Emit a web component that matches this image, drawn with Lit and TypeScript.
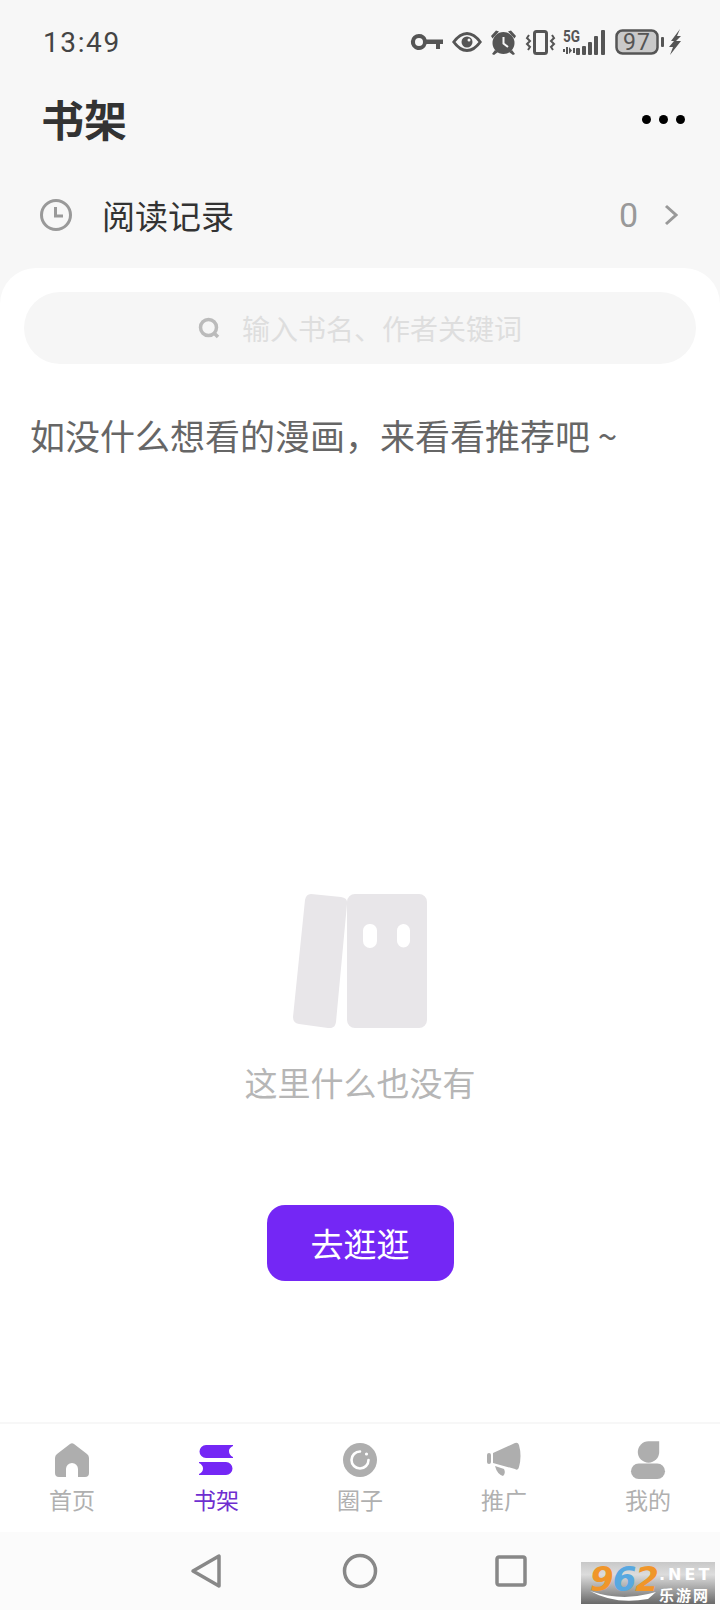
import { LitElement, css, html, svg } from "lit";
import { customElement } from "lit/decorators.js";

const tabs = [
  {
    label: "首页",
    icon: svg`<path d="M15 1 Q17 -0.500 19 1 L32 11 Q34 12.500 34 15 V30 Q34 34 30 34 H23 V26 A6 6 0 0 0 11 26 V34 H4 Q0 34 0 30 V15 Q0 12.500 2 11 Z"/>`,
  },
  {
    label: "书架",
    active: true,
    icon: svg`<path d="M7 2 H34 V3 Q30 5 30 8 Q30 12 34 14 V15 H7 A6.500 6.500 0 0 1 7 2 Z"/><path d="M0 19 H27 A6.500 6.500 0 0 1 27 32 H0 V31 Q4 29 4 25.500 Q4 22 0 20 Z"/>`,
  },
  {
    label: "圈子",
    icon: svg`<circle cx="17" cy="17" r="17"/><path d="M17 8.500 A8.500 8.500 0 1 0 25.500 17" fill="none" stroke="#fff" stroke-width="2.600" stroke-linecap="round"/><circle cx="23.500" cy="11" r="1.600" fill="#fff"/>`,
  },
  {
    label: "推广",
    icon: svg`<rect x="0" y="10" width="4" height="11" rx="2"/><path d="M6 10 L28 0 Q31 -1 32 2 Q35 13 32 24 Q31 28 28 26 L6 20 Z"/><path d="M8 23 L17 26 Q19 30 16 33 Q10 31 8 23 Z"/>`,
  },
  {
    label: "我的",
    icon: svg`<path d="M17.500 -1.700 H28.200 V9 A10.700 10.700 0 1 1 17.500 -1.700 Z"/><rect x="0" y="20.500" width="34" height="15.500" rx="7.750"/>`,
  },
];

@customElement("app-root")
export class AppRoot extends LitElement {
  static styles = css`
    :host {
      display: flex;
      flex-direction: column;
      position: relative;
      width: 720px;
      height: 1610px;
      background: #f7f7f7;
      font-family: "Noto Sans CJK SC", "Noto Sans", sans-serif;
      overflow: hidden;
    }

    .status {
      display: flex;
      align-items: center;
      justify-content: space-between;
      height: 26px;
      padding: 29px 39px 1px 43px;
    }
    .time {
      position: relative;
      top: 1px;
      font: 400 28px/26px Roboto, sans-serif;
      letter-spacing: 1.600px;
      color: #444;
    }
    .status-icons {
      display: flex;
      align-items: center;
      color: #555;
    }
    .status-icons svg {
      display: block;
      fill: currentColor;
      overflow: visible;
    }

    .header {
      display: flex;
      align-items: center;
      justify-content: space-between;
      height: 60px;
      margin-top: 32px;
      padding: 0 35px 0 41px;
    }
    h1 {
      margin: 0;
      font-size: 43px;
      line-height: 60px;
      font-weight: 700;
      color: #333;
    }
    .more {
      display: flex;
      gap: 8px;
      margin-top: 2px;
    }
    .more i {
      width: 9px;
      height: 9px;
      border-radius: 50%;
      background: #000;
    }

    .history {
      display: flex;
      align-items: center;
      height: 60px;
      margin-top: 37px;
      padding: 0 40px;
      font-size: 33px;
      color: #333;
    }
    .history .name {
      margin-left: 30px;
      flex: 1;
    }
    .history .count {
      font: 400 34px Roboto, sans-serif;
      color: #999;
      margin-right: 26px;
    }
    .history svg {
      display: block;
    }

    .sheet {
      flex: 1;
      display: flex;
      flex-direction: column;
      align-items: center;
      margin-top: 23px;
      padding-top: 24px;
      background: #fff;
      border-radius: 36px 36px 0 0;
    }
    .search {
      display: flex;
      align-items: center;
      justify-content: center;
      gap: 22px;
      width: 672px;
      height: 72px;
      border-radius: 36px;
      background: #f6f6f6;
      font-size: 28px;
      color: #dedede;
    }
    .prompt {
      align-self: flex-start;
      margin: 43px 0 0 30px;
      font-size: 35px;
      line-height: 56px;
      color: #666;
    }
    .empty-icon {
      display: block;
      margin-top: 431px;
    }
    .empty-text {
      margin-top: 29px;
      font-size: 33px;
      line-height: 50px;
      color: #b6b6b6;
    }
    .go {
      width: 187px;
      height: 76px;
      margin-top: 98px;
      border: 0;
      border-radius: 18px;
      background: #7427f5;
      color: #fff;
      font-family: inherit;
      font-size: 33px;
    }

    .tabbar {
      display: grid;
      grid-template-columns: repeat(5, 144px);
      height: 110px;
      box-sizing: border-box;
      border-top: 2px solid #f7f7f7;
      background: #fff;
    }
    .tab {
      display: flex;
      flex-direction: column;
      align-items: center;
      padding-top: 19px;
      color: #b0b0b0;
      font-size: 23px;
      line-height: 30px;
    }
    .tab svg {
      display: block;
      width: 34px;
      height: 38px;
      fill: #aeaeae;
      margin-bottom: 3px;
      overflow: visible;
    }
    .tab.active {
      color: #6f2fd0;
    }
    .tab.active svg {
      fill: #7427f5;
    }

    .nav {
      display: flex;
      align-items: center;
      justify-content: center;
      gap: 120px;
      height: 78px;
      box-sizing: border-box;
      background: #fbfbfb;
    }
    .nav svg {
      display: block;
      fill: none;
      stroke: #888;
      stroke-width: 3.500;
      stroke-linejoin: round;
    }
    .nav svg:last-child {
      margin-left: -3px;
      margin-right: 3px;
    }

    .watermark {
      position: absolute;
      left: 581px;
      top: 1562px;
      width: 134px;
      height: 42px;
      display: flex;
      background: linear-gradient(#c8c8c8, #dcdcdc 30%, #a4a4a4 65%, #686868);
      color: #fff;
    }
    .watermark .num {
      margin: -3px 0 0 9px;
      width: 68px;
      font: italic 700 34px/40px "DejaVu Sans", sans-serif;
      letter-spacing: -1px;
      color: #f0962a;
    }
    .watermark .num b {
      color: #58a8e0;
    }
    .watermark .side {
      display: flex;
      flex-direction: column;
      margin-left: 1px;
    }
    .watermark .net {
      font: 700 16px/19px "DejaVu Sans", sans-serif;
      letter-spacing: 3px;
      margin-top: 3px;
    }
    .watermark .cn {
      font-size: 15px;
      line-height: 22px;
      font-weight: 700;
      letter-spacing: 2px;
    }
    .watermark svg {
      position: absolute;
      left: 9px;
      top: 29px;
    }
  `;

  statusIcons() {
    return html`
      <div class="status-icons">
        <svg width="32" height="18" viewBox="0 0 32 18" style="margin-right:9px">
          <path fill-rule="evenodd" d="M8 1 A8 8 0 0 1 15.600 6.500 H32 V11 H29 V16 H25 V11 H15.600 A8 8 0 1 1 8 1 Z M8 5 A4 4 0 1 0 8 13 A4 4 0 0 0 8 5 Z"/>
        </svg>
        <svg width="30" height="20" viewBox="0 0 30 20" style="margin-right:9px">
          <path fill-rule="evenodd" d="M0 10 Q7 0 15 0 Q23 0 30 10 Q23 20 15 20 Q7 20 0 10 Z M3.500 10 Q9 17 15 17 Q21 17 26.500 10 Q21 3 15 3 Q9 3 3.500 10 Z"/>
          <circle cx="15" cy="10" r="5.500"/>
          <circle cx="17" cy="8" r="1.500" fill="#f7f7f7"/>
        </svg>
        <svg width="25" height="25" viewBox="0 0 25 25" style="margin-right:10px">
          <circle cx="12.500" cy="13" r="11"/>
          <path d="M0 6 L5 0.500 L8 1.500 L1.500 8.500 Z M25 6 L20 0.500 L17 1.500 L23.500 8.500 Z M4 20 L1 24 L3 25 L7 22 Z M21 20 L24 24 L22 25 L18 22 Z"/>
          <path d="M12.500 7 V13.500 L17 17" fill="none" stroke="#f7f7f7" stroke-width="2"/>
        </svg>
        <svg width="29" height="25" viewBox="0 0 29 25" style="margin-right:8px">
          <rect x="8.500" y="1.500" width="12" height="22" rx="2" fill="none" stroke="currentColor" stroke-width="3"/>
          <path d="M3 5 L1 8 L4 11 L1 14 L4 17 L2 20 M26 5 L28 8 L25 11 L28 14 L25 17 L27 20" fill="none" stroke="currentColor" stroke-width="2"/>
        </svg>
        <svg width="42" height="26" viewBox="0 0 42 26" style="margin-right:10px">
          <text x="0" y="13" font-family="Roboto, sans-serif" font-size="17" font-weight="700" textLength="17" lengthAdjust="spacingAndGlyphs">5G</text>
          <path d="M0 20 H2 V23 H0 Z M3 18 H5 V25 H3 Z M6 18 L9 21.500 L6 25 Z M10 19 H12 V24 H10 Z"/>
          <rect x="13" y="19" width="4" height="7" rx="1"/>
          <rect x="19" y="17" width="4" height="9" rx="1"/>
          <rect x="25" y="13" width="4" height="13" rx="1"/>
          <rect x="31" y="7" width="4" height="19" rx="1"/>
          <rect x="38" y="1" width="4" height="25" rx="1"/>
        </svg>
        <svg width="50" height="26" viewBox="0 0 50 26" style="margin-right:4px">
          <rect x="1.500" y="1.500" width="41" height="23" rx="6" fill="#c9c9c9" stroke="currentColor" stroke-width="2.500"/>
          <rect x="46" y="8" width="3" height="10" rx="1"/>
          <text x="22" y="21" text-anchor="middle" font-family="Roboto, sans-serif" font-size="23" letter-spacing="1">97</text>
        </svg>
        <svg width="12" height="26" viewBox="0 0 12 26">
          <path d="M11 0 L2 12 H5 L0 18 H4 L1 26 L12 12 H7 L12 7 H8 Z"/>
        </svg>
      </div>
    `;
  }

  render() {
    return html`
      <div class="status">
        <span class="time">13:49</span>
        ${this.statusIcons()}
      </div>

      <div class="header">
        <h1>书架</h1>
        <div class="more"><i></i><i></i><i></i></div>
      </div>

      <div class="history">
        <svg width="32" height="32" viewBox="0 0 32 32" fill="none" stroke="#999" stroke-width="3">
          <circle cx="16" cy="16" r="14.500" />
          <path d="M15.500 8 V17 H23" />
        </svg>
        <span class="name">阅读记录</span>
        <span class="count">0</span>
        <svg width="14" height="22" viewBox="0 0 14 22" fill="none" stroke="#999" stroke-width="3" style="margin-right:2px">
          <path d="M2 2 L12 11 L2 20" />
        </svg>
      </div>

      <div class="sheet">
        <div class="search">
          <svg width="22" height="22" viewBox="0 0 22 22" fill="none" stroke="#bbb" stroke-width="3.500">
            <circle cx="10.500" cy="10.500" r="8" />
            <path d="M16 16 L20 20" />
          </svg>
          <span>输入书名、作者关键词</span>
        </div>
        <div class="prompt">如没什么想看的漫画，来看看推荐吧 ~</div>

        <svg class="empty-icon" width="134" height="134" viewBox="0 0 134 134" fill="#e8e6e9">
          <path d="M18 0 L48 3 Q55 4 54 10 L43 128 Q42 135 35 134 L6 130 Q0 129 0 123 L12 6 Q13 0 18 0 Z" />
          <path fill-rule="evenodd" d="M62 0 H126 A8 8 0 0 1 134 8 V126 A8 8 0 0 1 126 134 H62 A8 8 0 0 1 54 126 V8 A8 8 0 0 1 62 0 Z M77 30 A6.500 6.500 0 0 0 70 37 V47 A6.500 6.500 0 0 0 84 47 V37 A6.500 6.500 0 0 0 77 30 Z M110 30 A6.500 6.500 0 0 0 104 37 V47 A6.500 6.500 0 0 0 117 47 V37 A6.500 6.500 0 0 0 110 30 Z" />
        </svg>
        <div class="empty-text">这里什么也没有</div>
        <button class="go">去逛逛</button>
      </div>

      <div class="tabbar">
        ${tabs.map(
          (t) => html`
            <div class="tab ${t.active ? "active" : ""}">
              <svg viewBox="0 0 34 38">${t.icon}</svg>
              <span>${t.label}</span>
            </div>
          `
        )}
      </div>

      <div class="nav">
        <svg width="32" height="36" viewBox="0 0 32 36"><path d="M29 3 V33 L3 18 Z" /></svg>
        <svg width="36" height="36" viewBox="0 0 36 36"><circle cx="18" cy="18" r="15.500" /></svg>
        <svg width="32" height="32" viewBox="0 0 32 32"><rect x="2" y="2" width="28" height="28" rx="2" /></svg>
      </div>

      <div class="watermark">
        <span class="num">9<b>6</b>2</span>
        <div class="side">
          <span class="net">.NET</span>
          <span class="cn">乐游网</span>
        </div>
        <svg width="66" height="12" viewBox="0 0 66 12">
          <path d="M0 0 Q30 10 58 3 L66 1 L58 8 Q25 14 0 0 Z" fill="#fff" />
        </svg>
      </div>
    `;
  }
}
